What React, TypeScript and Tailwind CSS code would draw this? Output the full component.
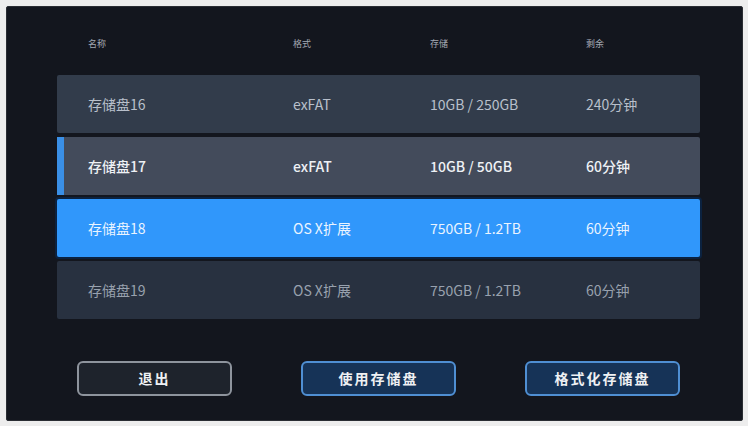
import React from "react";

const rows = [
  { name: "存储盘16", fmt: "exFAT", size: "10GB / 250GB", rem: "240分钟", kind: "normal" },
  { name: "存储盘17", fmt: "exFAT", size: "10GB / 50GB", rem: "60分钟", kind: "focus" },
  { name: "存储盘18", fmt: "OS X扩展", size: "750GB / 1.2TB", rem: "60分钟", kind: "selected" },
  { name: "存储盘19", fmt: "OS X扩展", size: "750GB / 1.2TB", rem: "60分钟", kind: "dim" },
];

export default function App() {
  return (
    <div
      className="w-[748px] h-[426px] bg-[#ededed] p-[6px] pr-[5px] pb-[5px]"
      style={{ fontFamily: '"Noto Sans CJK SC", "Noto Sans", sans-serif' }}
    >
      <div className="w-full h-full bg-[#13161e] rounded-[2px] border border-[#2a2d33] flex flex-col pt-[29px]">
        <div className="ml-[50px] w-[643px] h-[16px] grid grid-cols-[205px_137px_156px_1fr] pl-[31px] text-[9px] leading-[16px] text-[#a3a9b3]">
          <div>名称</div>
          <div>格式</div>
          <div>存储</div>
          <div>剩余</div>
        </div>
        <div className="ml-[50px] w-[643px] mt-[23px] flex flex-col gap-[4px]">
          {rows.map((r) => {
            const base =
              r.kind === "normal"
                ? "bg-[#323c4b] text-[#b9c0cb]"
                : r.kind === "focus"
                ? "bg-[#434b5b] text-[#eef1f5] font-medium"
                : r.kind === "selected"
                ? "bg-[#3097fb] text-[#eaf4ff] shadow-[0_0_0_2px_#0b2240]"
                : "bg-[#283140] text-[#98a1ae]";
            return (
              <div
                key={r.name}
                className={`relative h-[58px] rounded-[2px] grid grid-cols-[205px_137px_156px_1fr] items-center pl-[31px] text-[14px] ${base}`}
              >
                {r.kind === "focus" && (
                  <div className="absolute left-0 top-0 bottom-0 w-[7px] bg-[#3a8fe6]" />
                )}
                <div>{r.name}</div>
                <div>{r.fmt}</div>
                <div>{r.size}</div>
                <div>{r.rem}</div>
              </div>
            );
          })}
        </div>
        <div className="ml-[70px] mt-[42px] flex gap-[69px]">
          <button className="w-[155px] h-[35px] rounded-[6px] border-2 border-[#8e949d] bg-[#1e232c] text-[#eef0f3] text-[14px] font-bold tracking-[2px] flex items-center justify-center">
            退出
          </button>
          <button className="w-[155px] h-[35px] rounded-[6px] border-2 border-[#4f8fd3] bg-[#163357] text-[#eef0f3] text-[14px] font-bold tracking-[2px] flex items-center justify-center">
            使用存储盘
          </button>
          <button className="w-[155px] h-[35px] rounded-[6px] border-2 border-[#4f8fd3] bg-[#163357] text-[#eef0f3] text-[14px] font-bold tracking-[2px] flex items-center justify-center">
            格式化存储盘
          </button>
        </div>
      </div>
    </div>
  );
}
